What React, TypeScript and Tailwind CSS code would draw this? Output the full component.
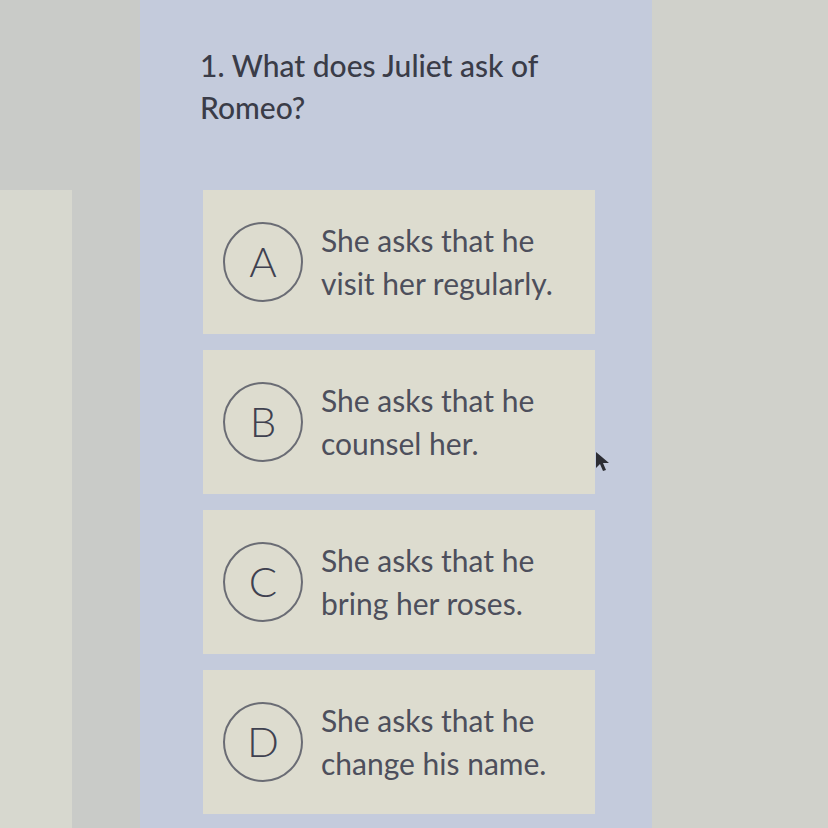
const options = [
  { letter: "A", lines: ["She asks that he", "visit her regularly."] },
  { letter: "B", lines: ["She asks that he", "counsel her."] },
  { letter: "C", lines: ["She asks that he", "bring her roses."] },
  { letter: "D", lines: ["She asks that he", "change his name."] },
]

function Pointer() {
  return (
    <svg width="20" height="24" viewBox="0 0 20 24" className="absolute left-[594px] top-[450px]">
      <path d="M2 2 L2 18 L6 14 L9 21 L12 20 L9 13 L15 13 Z" fill="#2c2d33" />
    </svg>
  )
}

function Option({ letter, lines }: { letter: string; lines: string[] }) {
  return (
    <div className="flex h-[144px] w-[392px] items-center gap-[18px] bg-[#dddccf] pl-[20px]">
      <div className="flex h-[80px] w-[80px] shrink-0 items-center justify-center rounded-full border-2 border-[#6a6c74] pb-[2px] text-[42px] font-light text-[#3f4150]">
        {letter}
      </div>
      <div className="text-[30px] leading-[43px] text-[#4d4f5c]">
        {lines.map((l) => (
          <div key={l}>{l}</div>
        ))}
      </div>
    </div>
  )
}

export default function App() {
  return (
    <div className="relative flex h-[828px] w-[828px] overflow-hidden bg-[#cfd0cb] font-['Lato',sans-serif]">
      <div className="flex w-[140px] flex-col bg-[#c9cbc8] pt-[190px]">
        <div className="w-[72px] flex-1 bg-[#d7d8cf]" />
      </div>

      <div className="w-[512px] bg-[#c4cbdc] pl-[60px] pt-[44px]">
        <h1 className="text-[30px] font-medium leading-[42px] text-[#3a3c48]">
          1. What does Juliet ask of
          <br />
          Romeo?
        </h1>
        <div className="ml-[3px] mt-[62px] flex flex-col gap-[16px]">
          {options.map((o) => (
            <Option key={o.letter} {...o} />
          ))}
        </div>
      </div>

      <div className="flex-1 bg-[#d0d1cb]" />
      <Pointer />
    </div>
  )
}
